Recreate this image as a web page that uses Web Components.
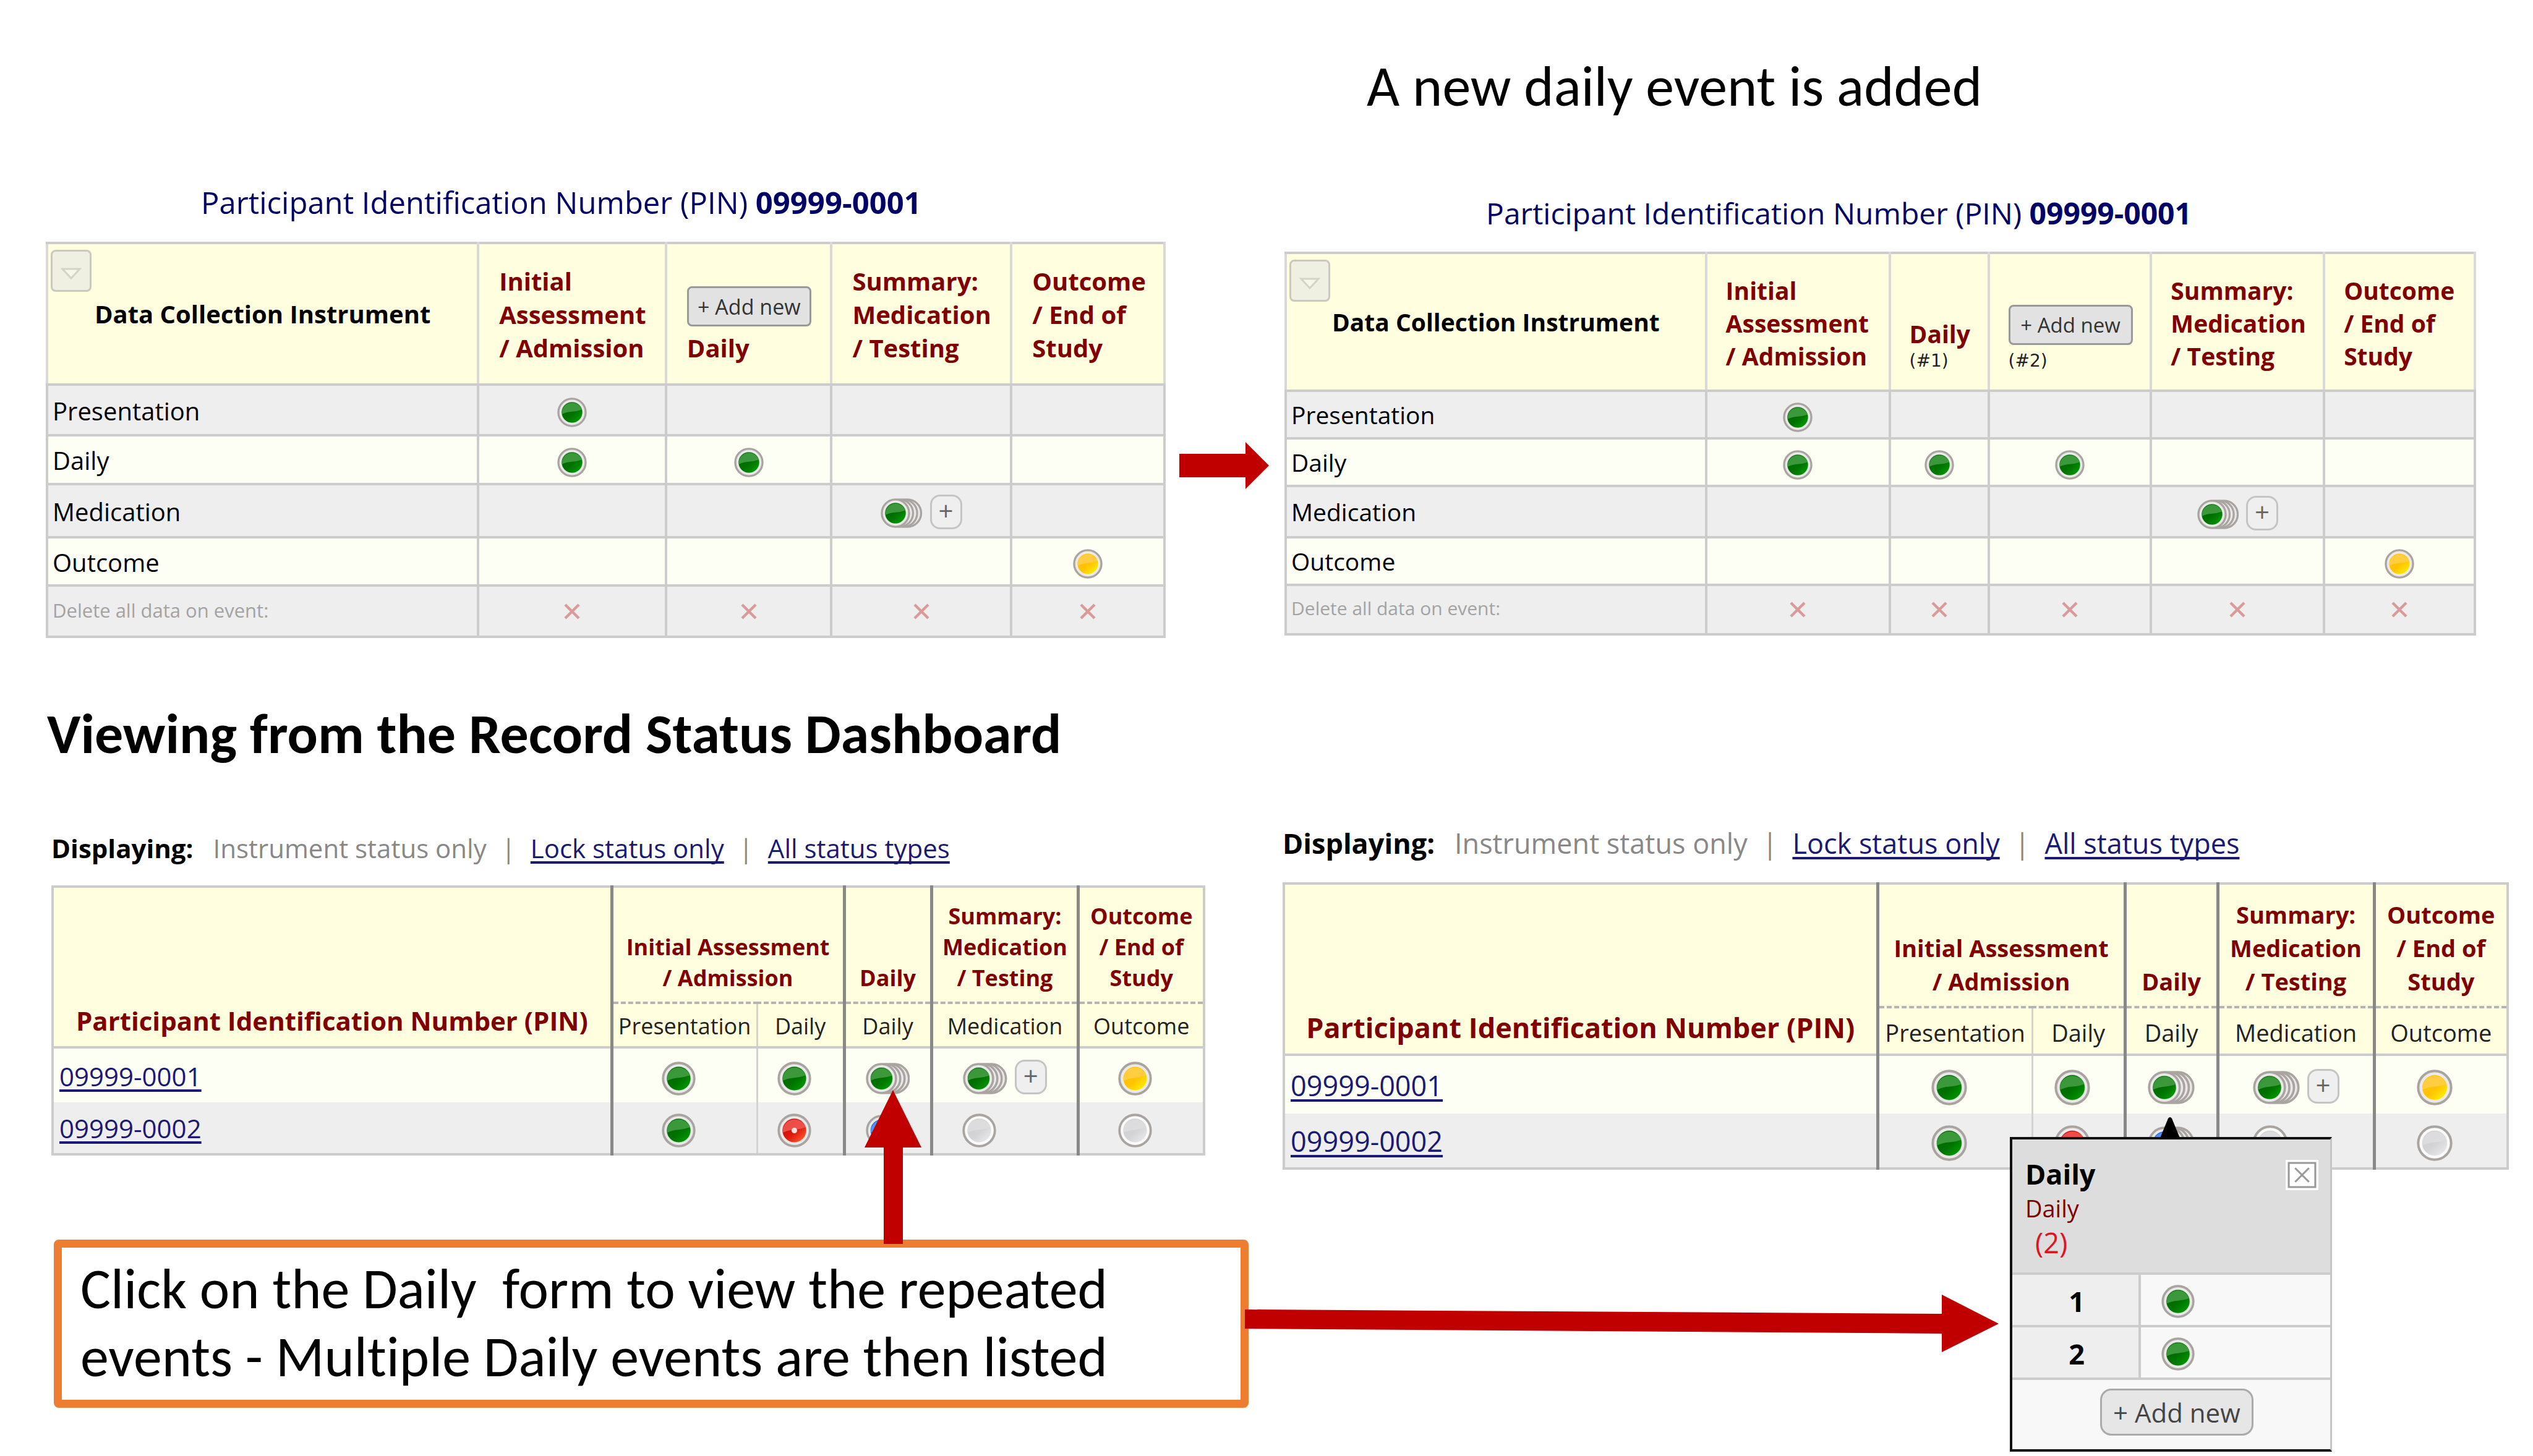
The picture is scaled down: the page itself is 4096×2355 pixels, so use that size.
<!DOCTYPE html>
<html lang="en">
<head>
<meta charset="utf-8">
<title>Repeating daily events</title>
<style>
  body { margin: 0; background: #fff; color: #000; font-family: "Open Sans", "Noto Sans", sans-serif; }
</style>
</head>
<body>
<event-guide></event-guide>

<template id="event-guide">
  <style>
    :host { display: block; }
    .compare { display: flex; align-items: flex-start; padding: 0 92px 0 74px; }
    .before { flex: 1812 1 0; min-width: 0; padding-top: 293px; }
    .after { flex: 1928 1 0; min-width: 0; padding-top: 90px; }
    .next { flex: none; width: 145px; height: 76px; margin: 715px 25px 0 22px; }
    h1, h2, p { margin: 0; font-family: Carlito, Lato, sans-serif; font-size: 92px; font-variant-ligatures: none; }
    h1 { font-weight: 400; line-height: 100px; padding-left: 133px; margin-bottom: 121px; }
    h2 { font-weight: 700; line-height: 100px; padding: 105px 0 0 76px; }
    .dashboards { display: flex; align-items: flex-start; gap: 55px; padding: 0 39px 78px 83px; }
    .closed { flex: 1936 1 0; min-width: 0; padding-top: 106px; }
    .opened { flex: 1983 1 0; min-width: 0; position: relative; margin-top: 97px; }
    .closed status-dashboard { margin-right: 70px; }
    .callout { position: relative; margin: 136px 0 0 4px; border: 13px solid #ed7d31; border-radius: 8px; padding: 12px 30px 14px; }
    .callout p { line-height: 110px; white-space: pre-wrap; }
    svg { display: block; fill: #c00000; }
    .up { position: absolute; left: 1298px; bottom: calc(100% + 6px); width: 92px; height: 249px; }
    .across { position: absolute; left: calc(100% + 7px); top: 76px; width: 1219px; height: 93px; }
    repeat-popup { position: absolute; left: 59.3%; top: 505px; width: 521px; }
  </style>
  <section class="compare">
    <record-home class="before" kind="single"></record-home>
    <svg class="next" viewBox="0 0 145 76" aria-hidden="true"><path d="M0 19H107V0L145 38L107 76V57H0Z"/></svg>
    <div class="after">
      <h1>A new daily event is added</h1>
      <record-home kind="repeated"></record-home>
    </div>
  </section>
  <h2>Viewing from the Record Status Dashboard</h2>
  <section class="dashboards">
    <div class="closed">
      <status-dashboard></status-dashboard>
      <div class="callout">
        <p>Click on the Daily  form to view the repeated<br>events - Multiple Daily events are then listed</p>
        <svg class="up" viewBox="0 0 92 249" aria-hidden="true"><path d="M46 0L92 93H62V249H31V93H0Z"/></svg>
        <svg class="across" viewBox="0 0 1219 93" aria-hidden="true"><path d="M0 24L1127 31V0L1219 47L1127 93V63L0 55Z"/></svg>
      </div>
    </div>
    <div class="opened">
      <status-dashboard large></status-dashboard>
      <repeat-popup></repeat-popup>
    </div>
  </section>
</template>

<template id="record-home">
  <style>
    :host { display: block; --text: 40px; --line: 54px; --small: 31px; --add: 34px; --title: 49px; --indent: 251px; --gap: 30px; --foot: 30px; --side: 32px; --drop: 3px; }
    :host([kind="repeated"]) { --text: 39px; --line: 53px; --small: 30px; --add: 33px; --title: 48px; --indent: 326px; --gap: 28px; --foot: 28px; --side: 30px; --drop: 0px; }
    .title { font-size: var(--title); line-height: 68px; color: #000066; padding-left: var(--indent); margin-bottom: var(--gap); white-space: nowrap; }
    table { width: 100%; table-layout: fixed; border-collapse: collapse; font-size: var(--text); line-height: var(--line); }
    th, td { border: 4px solid #ccc; padding: 0; }
    thead th { background: #ffffe0; border-left-color: #d9d9d9; border-right-color: #d9d9d9; color: #800000; text-align: left; vertical-align: bottom; padding: 0 0 var(--foot) var(--side); white-space: nowrap; }
    thead th.corner { position: relative; color: #000; text-align: center; vertical-align: middle; padding: 0; }
    tbody th { font-weight: 400; text-align: left; padding: var(--drop) 0 0 7px; }
    tbody tr { background: #fdfff5; }
    tbody tr:nth-child(odd) { background: #eee; }
    td { text-align: center; vertical-align: middle; line-height: 0; padding-top: 8px; }
    tbody tr:last-child th { font-size: var(--small); color: #a3a3a3; padding-bottom: 6px; }
    tbody tr:last-child td { padding-top: 0; }
    small { display: block; font: 28px/36px "DejaVu Sans", sans-serif; color: #222; }
    button { font-family: inherit; cursor: pointer; }
    .add { display: block; box-sizing: border-box; width: 201px; height: 65px; margin: 0 0 8px; padding: 0; border: 3px solid #999; border-radius: 8px; background: #e2e2e2; color: #333; font-size: var(--add); }
    .menu { position: absolute; left: 4px; top: 9px; box-sizing: border-box; width: 66px; height: 68px; padding: 0; border: 3px solid #c9c9be; border-radius: 8px; background: #f0f0e2; }
    .menu svg { display: block; margin: 10px auto 0; width: 34px; height: 20px; }
    .delete { border: 0; background: none; padding: 0; }
    .delete svg { display: block; width: 30px; height: 28px; }
  </style>
  <div class="title">Participant Identification Number (PIN) <b>09999-0001</b></div>
  <table><colgroup></colgroup><thead></thead><tbody></tbody></table>
</template>

<template id="status-dashboard">
  <style>
    :host { display: block; --text: 42px; --line: 58px; --head: 36px; --headline: 50px; --dot: 55px; --stack: 51px; --gap: 31px; }
    :host([large]) { --text: 45px; --line: 60px; --head: 38px; --headline: 54px; --dot: 58px; --stack: 54px; --gap: 33px; }
    nav { display: flex; font-size: var(--text); line-height: var(--line); margin-bottom: var(--gap); color: #888; white-space: nowrap; }
    nav b { color: #000; margin-right: 32px; }
    nav i { font-style: normal; margin: 0 24px; }
    a { color: #1a1a75; text-decoration: underline; text-decoration-thickness: 4px; text-underline-offset: 5px; text-decoration-skip-ink: none; }
    table { width: 100%; table-layout: fixed; border: 4px solid #ccc; border-collapse: collapse; font-size: var(--text); line-height: var(--line); }
    th, td { padding: 0; border: 0 solid #ccc; }
    thead th { background: #ffffe0; vertical-align: bottom; color: #800000; text-align: center; white-space: nowrap; }
    .event { font-size: var(--head); line-height: var(--headline); padding-bottom: 13px; border-bottom: 4px dashed #b5b5b5; }
    thead .form { font-size: var(--head); line-height: var(--headline); font-weight: 400; color: #222; vertical-align: middle; padding-top: 4px; }
    .pin { padding-bottom: 12px; }
    .edge { border-left: 5px solid #888; }
    .thin { border-left: 3px solid #d3d3d3; }
    tbody tr { background: #fdfff5; }
    tbody tr:nth-child(2) { background: #eee; }
    tbody tr:first-child > * { border-top: 4px solid #ccc; }
    tbody th { font-weight: 400; text-align: left; padding: 2px 0 0 9px; }
    td { text-align: center; vertical-align: middle; line-height: 0; padding-top: 9px; }
    td.single { padding-right: 20px; }
    td.first { padding-right: 83px; }
    status-dot[stack] { --dot: var(--stack); }
  </style>
  <nav><b>Displaying:</b><span>Instrument status only</span><i>|</i><a href="#lock">Lock status only</a><i>|</i><a href="#all">All status types</a></nav>
  <table><colgroup></colgroup>
    <thead>
      <tr class="events">
        <th class="pin" rowspan="2">Participant Identification Number (PIN)</th>
        <th class="event edge" colspan="2">Initial Assessment<br>/ Admission</th>
        <th class="event edge">Daily</th>
        <th class="event edge">Summary:<br>Medication<br>/ Testing</th>
        <th class="event edge">Outcome<br>/ End of<br>Study</th>
      </tr>
      <tr class="forms">
        <th class="form edge">Presentation</th><th class="form thin">Daily</th><th class="form edge">Daily</th><th class="form edge">Medication</th><th class="form edge">Outcome</th>
      </tr>
    </thead>
    <tbody>
      <tr>
        <th><a href="#09999-0001">09999-0001</a></th>
        <td class="edge single"><status-dot color="green"></status-dot></td>
        <td class="thin single"><status-dot color="green"></status-dot></td>
        <td class="edge"><status-dot color="green" stack></status-dot></td>
        <td class="edge"><status-dot color="green" stack></status-dot><plus-button></plus-button></td>
        <td class="edge single"><status-dot color="yellow"></status-dot></td>
      </tr>
      <tr>
        <th><a href="#09999-0002">09999-0002</a></th>
        <td class="edge single"><status-dot color="green"></status-dot></td>
        <td class="thin single"><status-dot color="red"></status-dot></td>
        <td class="edge"><status-dot color="blue" stack></status-dot></td>
        <td class="edge first"><status-dot color="gray"></status-dot></td>
        <td class="edge single"><status-dot color="gray"></status-dot></td>
      </tr>
    </tbody>
  </table>
</template>

<template id="repeat-popup">
  <style>
    :host { display: block; box-sizing: border-box; border: 4px solid #111; border-right: 3px solid #c4c4c4; background: #f8f8f8; --dot: 54px; }
    .tip { position: absolute; left: 238px; bottom: 100%; width: 34px; height: 36px; }
    header { position: relative; box-sizing: border-box; background: #ddd; padding: 26px 24px 0 21px; height: 219px; border-bottom: 4px solid #ccc; }
    .name { font-size: 45px; line-height: 60px; font-weight: 700; }
    .form { font-size: 38px; line-height: 50px; color: #800000; }
    .count { font-size: 45px; line-height: 62px; color: #e0141e; padding-left: 16px; }
    .close { position: absolute; right: 19px; top: 33px; box-sizing: border-box; width: 53px; height: 49px; padding: 0; border: 3px solid #fff; background: #fff; }
    .close svg { display: block; width: 47px; height: 43px; }
    table { width: 100%; border-collapse: collapse; table-layout: fixed; font-size: 45px; line-height: 60px; }
    th, td { padding: 4px 0 0; height: 77px; border-bottom: 4px solid #ccc; }
    th { width: 39%; background: #eee; border-right: 4px solid #ccc; padding-left: 4px; }
    td { text-align: left; padding-left: 33px; vertical-align: middle; line-height: 0; }
    footer { padding: 14px 0 22px 18px; }
    .add { display: block; box-sizing: border-box; width: 248px; height: 76px; margin: 0 auto; padding: 0; font: 42px "Open Sans", sans-serif; color: #444; background: #e6e6e6; border: 3px solid #aaa; border-radius: 18px; }
  </style>
  <svg class="tip" viewBox="0 0 34 36" aria-hidden="true"><path d="M14 2Q17 -2 20 2L34 36H0Z"/></svg>
  <header>
    <div class="name">Daily</div><div class="form">Daily</div><div class="count">(2)</div>
    <button class="close" aria-label="Close"><svg viewBox="0 0 46 42"><path d="M2 2H44V40H2ZM12 10L34 32M34 10L12 32" fill="none" stroke="#999" stroke-width="3"/></svg></button>
  </header>
  <table><tbody>
    <tr><th>1</th><td><status-dot color="green"></status-dot></td></tr>
    <tr><th>2</th><td><status-dot color="green"></status-dot></td></tr>
  </tbody></table>
  <footer><button class="add">+ Add new</button></footer>
</template>

<script>
  const attach = (host, id) => {
    const root = host.attachShadow({ mode: "open" });
    root.append(document.getElementById(id).content.cloneNode(true));
    return root;
  };
  const columns = list => {
    const total = list.reduce((a, b) => a + b, 0);
    return list.map(w => `<col style="width:${Math.round(w / total * 10000) / 100}%">`).join("");
  };

  // Core colours of each status: [top left, middle, bottom right, gloss]
  const CORES = {
    green: ["#006400", "#007200", "#009a00", "#45a045"],
    yellow: ["#ffbe1e", "#ffc400", "#fff000", "#ffcf4a"],
    red: ["#c40000", "#dc1a10", "#ff5a28", "#f05a52"],
    blue: ["#1450b4", "#2878f0", "#50a0ff", "#5a9bff"],
    gray: ["#cfcfd1", "#d4d4d6", "#e9e9ec", "#dededf"]
  };

  customElements.define("status-dot", class extends HTMLElement {
    connectedCallback() {
      if (this.shadowRoot) return;
      const color = this.getAttribute("color");
      const stack = this.hasAttribute("stack");
      const [a, b, c, gloss] = CORES[color];
      const width = stack ? 45 : 32;
      const inner = color === "gray" ? "#fafafa" : "#e9e7e7";
      const rim = x => `<circle cx="${x}" cy="16" r="14.700" fill="${inner}" stroke="#aaa4a1" stroke-width="2.200"/>`;
      this.attachShadow({ mode: "open" }).innerHTML = `
        <style>
          :host { display: inline-block; vertical-align: middle; width: calc(var(--dot, 48px) * ${width} / 32); height: var(--dot, 48px); }
          svg { display: block; width: 100%; height: 100%; }
        </style>
        <svg viewBox="0 0 ${width} 32" role="img" aria-label="${color} status">
          <defs><linearGradient id="core" x1="0.1" y1="0.1" x2="0.85" y2="0.95">
            <stop offset="0" stop-color="${a}"/><stop offset="0.55" stop-color="${b}"/><stop offset="1" stop-color="${c}"/>
          </linearGradient></defs>
          ${stack ? rim(29) + rim(24.7) + rim(20.3) : ""}
          ${rim(16)}
          <circle cx="16" cy="16" r="11.4" fill="url(#core)" stroke="#fff" stroke-opacity="0.5" stroke-width="0.8"/>
          <path d="M5.1 18Q10 15.600 16 15.200Q22 14.800 26.600 13A11.100 11.100 0 0 0 5.100 18Z" fill="${gloss}" opacity="0.85"/>
          ${color === "red" ? '<circle cx="16" cy="16" r="2.6" fill="#ffe0dc"/>' : ""}
        </svg>`;
    }
  });

  customElements.define("plus-button", class extends HTMLElement {
    connectedCallback() {
      if (this.shadowRoot) return;
      this.attachShadow({ mode: "open" }).innerHTML = `
        <style>
          :host { display: inline-block; vertical-align: middle; margin-left: 12px; margin-top: -4px; }
          button { display: block; box-sizing: border-box; width: 52px; height: 56px; padding: 0 0 5px; border: 3px solid #c4c4c4; border-radius: 16px; background: #efefef; color: #666; font: 42px/46px "Open Sans", sans-serif; }
        </style><button>+</button>`;
    }
  });

  const EVENTS = {
    single: {
      cols: [698, 304, 268, 291, 248],
      rows: [229, 82, 79, 86, 78, 83],
      heads: ["Initial<br>Assessment<br>/ Admission", "<button class='add'>+ Add new</button>Daily", "Summary:<br>Medication<br>/ Testing", "Outcome<br>/ End of<br>Study"],
      cells: [["g", "", "", ""], ["g", "g", "", ""], ["", "", "s", ""], ["", "", "", "y"], ["x", "x", "x", "x"]]
    },
    repeated: {
      cols: [680, 297, 160, 263, 280, 244],
      rows: [223, 77, 77, 83, 77, 80],
      heads: ["Initial<br>Assessment<br>/ Admission", "Daily<small>(#1)</small>", "<button class='add'>+ Add new</button><small>(#2)</small>", "Summary:<br>Medication<br>/ Testing", "Outcome<br>/ End of<br>Study"],
      cells: [["g", "", "", "", ""], ["g", "g", "g", "", ""], ["", "", "", "s", ""], ["", "", "", "", "y"], ["x", "x", "x", "x", "x"]]
    }
  };
  const FORMS = ["Presentation", "Daily", "Medication", "Outcome", "Delete all data on event:"];
  const CELL = {
    "": "",
    g: '<status-dot color="green"></status-dot>',
    y: '<status-dot color="yellow"></status-dot>',
    s: '<status-dot color="green" stack></status-dot><plus-button></plus-button>',
    x: '<button class="delete" aria-label="Delete"><svg viewBox="0 0 30 28"><path d="M4 3L26 25M26 3L4 25" stroke="#d99a9a" stroke-width="4.500"/></svg></button>'
  };

  customElements.define("record-home", class extends HTMLElement {
    connectedCallback() {
      if (this.shadowRoot) return;
      const root = attach(this, "record-home");
      const data = EVENTS[this.getAttribute("kind")];
      root.querySelector("colgroup").innerHTML = columns(data.cols);
      root.querySelector("thead").innerHTML = `<tr style="height:${data.rows[0]}px"><th class="corner">
        <button class="menu" aria-label="Choose instruments"><svg viewBox="0 0 34 20"><path d="M3 2H31L17 17Z" fill="#f6f6ea" stroke="#d4d4c6" stroke-width="3"/></svg></button>Data Collection Instrument</th>
        ${data.heads.map(h => `<th>${h}</th>`).join("")}</tr>`;
      root.querySelector("tbody").innerHTML = data.cells.map((row, i) =>
        `<tr style="height:${data.rows[i + 1]}px"><th>${FORMS[i]}</th>${row.map(c => `<td>${CELL[c]}</td>`).join("")}</tr>`).join("");
    }
  });

  customElements.define("status-dashboard", class extends HTMLElement {
    connectedCallback() {
      if (this.shadowRoot) return;
      const root = attach(this, "status-dashboard");
      const large = this.hasAttribute("large");
      root.querySelector("colgroup").innerHTML = columns(large ? [960, 250, 150, 150, 253, 216] : [904, 235, 141, 141, 238, 203]);
      const heights = large ? [200, 77, 95, 89] : [188, 72, 89, 84];
      root.querySelectorAll("tr").forEach((tr, i) => { tr.style.height = heights[i] + "px"; });
    }
  });

  customElements.define("repeat-popup", class extends HTMLElement {
    connectedCallback() { if (!this.shadowRoot) attach(this, "repeat-popup"); }
  });

  customElements.define("event-guide", class extends HTMLElement {
    connectedCallback() { if (!this.shadowRoot) attach(this, "event-guide"); }
  });
</script>
</body>
</html>
